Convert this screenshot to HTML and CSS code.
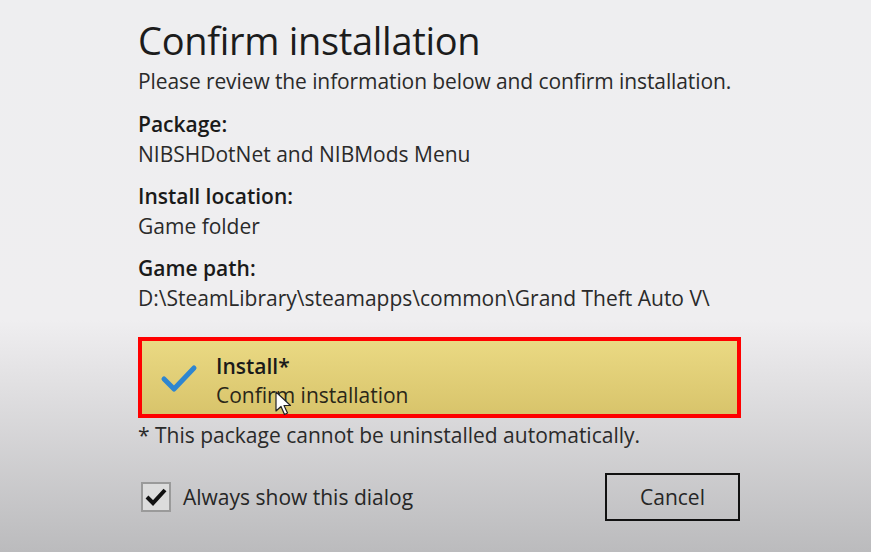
FILE: index.html
```html
<!DOCTYPE html>
<html lang="en">
<head>
  <meta charset="UTF-8" />
  <title>Confirm installation</title>
  <link rel="stylesheet" href="styles.css">
</head>
<body>

  <main class="dialog">
    <h1>Confirm installation</h1>
    <p class="lead">Please review the information below and confirm installation.</p>

    <dl class="info">
      <dt>Package:</dt>
      <dd>NIBSHDotNet and NIBMods Menu</dd>
      <dt>Install location:</dt>
      <dd>Game folder</dd>
      <dt>Game path:</dt>
      <dd>D:\SteamLibrary\steamapps\common\Grand Theft Auto V\</dd>
    </dl>

    <button class="install">
      <svg class="tick" width="38" height="32" viewBox="0 0 38 32">
        <path d="M4 17 L14 27 L34 6" fill="none" stroke="#2e86d0" stroke-width="5" stroke-linecap="round" stroke-linejoin="round"/>
      </svg>
      <span class="install-text">
        <strong>Install*</strong>
        <span>Confirm installation</span>
      </span>
      <svg class="cursor" width="20" height="26" viewBox="0 0 20 26">
        <path d="M1 1 L1 20 L6 15.5 L9.5 23.5 L12.5 22 L9 14.5 L15.5 14.5 Z" fill="#fff" stroke="#222" stroke-width="1.2" stroke-linejoin="round"/>
      </svg>
    </button>
    <p class="note">* This package cannot be uninstalled automatically.</p>

    <div class="footer">
      <label class="check">
        <span class="box">
          <svg width="24" height="20" viewBox="0 0 24 20">
            <path d="M3 10 L9 16 L21 3" fill="none" stroke="#111" stroke-width="4" stroke-linejoin="miter"/>
          </svg>
        </span>
        Always show this dialog
      </label>
      <button class="cancel">Cancel</button>
    </div>
  </main>

</body>
</html>
```

FILE: styles.css
```css
* { margin:0; padding:0; box-sizing:border-box; }
html, body { height:100%; }
body { font-family:"Open Sans", "Noto Sans", sans-serif; color:#1f1f1f; background:linear-gradient(#eeeef0 0, #efeef0 320px, #e2e1e3 380px, #bbbbbd 552px); overflow:hidden; }

.dialog { padding:17px 131px 0 138px; }
h1 { font-weight:400; font-size:38px; line-height:46px; letter-spacing:-0.3px; color:#1c1c1c; }
.lead { font-size:21px; line-height:30px; margin-top:3px; color:#2a2a2a; letter-spacing:-0.1px; }

.info { margin-top:13px; font-size:21px; line-height:30px; }
.info dt { font-weight:600; color:#1a1a1a; }
.info dd { color:#2a2a2a; margin-bottom:12px; }
.info dd:last-child { margin-bottom:0; }

.install { position:relative; display:flex; align-items:center; width:603px; height:81px; margin-top:24px; border:4px solid #ff0000; background:linear-gradient(#ead983, #d8c46b); font:inherit; text-align:left; cursor:pointer; }
.tick { margin:0 18px 0 18px; }
.install-text { display:flex; flex-direction:column; padding-top:6px; font-size:21px; line-height:29px; color:#2a2618; }
.install-text strong { font-weight:600; color:#1a1a1a; }
.cursor { position:absolute; left:133px; top:50px; }

.note { font-size:21px; line-height:30px; margin-top:2px; color:#2a2a2a; }

.footer { display:flex; justify-content:space-between; align-items:center; margin-top:23px; }
.check { display:flex; align-items:center; gap:12px; font-size:21px; color:#262626; margin-left:3px; }
.box { display:flex; align-items:center; justify-content:center; width:30px; height:30px; border:2px solid #9a9a9a; background:#dcdcdc; }
.cancel { width:135px; height:48px; border:2px solid #111; background:transparent; font:inherit; font-size:21px; color:#262626; }
```
